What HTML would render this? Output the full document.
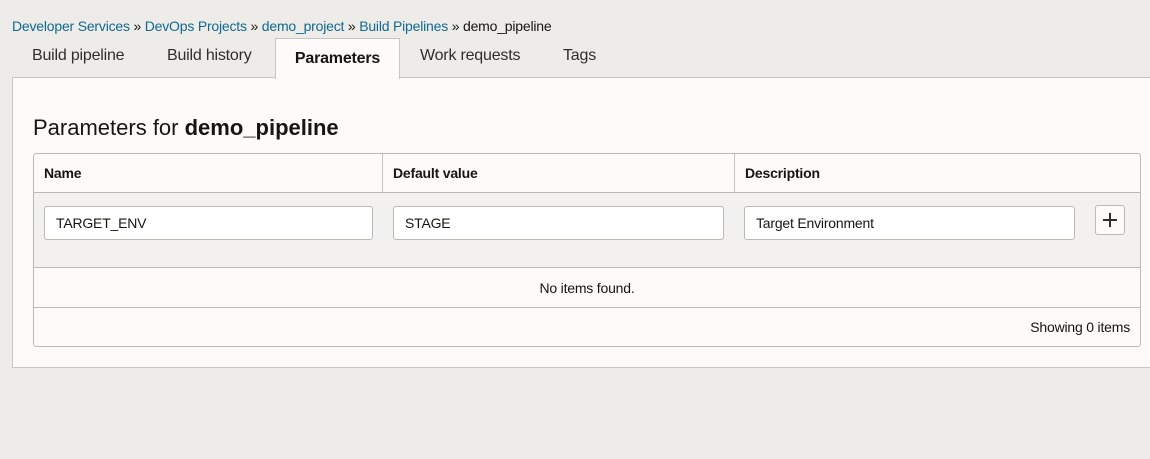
<!DOCTYPE html>
<html><head><style>
*{box-sizing:border-box;margin:0;padding:0}
body{width:1150px;height:459px;background:#eeece9;font-family:"Liberation Sans",sans-serif;position:relative;overflow:hidden;color:#161513}
.a{position:absolute}
.bc{top:18px;left:12px;font-size:14px;color:#161513;white-space:nowrap;letter-spacing:-0.2px}
.bc a{color:#0f6a8f;text-decoration:none}
.tab{top:47px;font-size:16px;color:#312d2a;letter-spacing:-0.2px}
.panel{left:12px;top:77px;width:1150px;height:291px;background:#fcfbfa;border:1px solid #c9c5c0}
.act{left:275px;top:38px;width:125px;height:41px;background:#fcfbfa;border:1px solid #c9c5c0;border-bottom:none;font-size:16px;font-weight:bold;text-align:center;line-height:40px;letter-spacing:-0.2px}
.tbl{left:33px;top:153px;width:1108px;height:194px;border:1px solid #bcb8b3;border-radius:3px;background:#fcfbfa}
.inp{height:34px;border:1px solid #bcb8b3;border-radius:3px;background:#fff;font-size:14px;padding-left:11px;line-height:32px;letter-spacing:-0.2px}
.th{font-size:14px;font-weight:bold;top:165px;letter-spacing:-0.2px}
</style></head><body>
<div class="a bc"><a>Developer Services</a> » <a>DevOps Projects</a> » <a>demo_project</a> » <a>Build Pipelines</a> » demo_pipeline</div>
<div class="a panel"></div>
<div class="a tab" style="left:32px">Build pipeline</div>
<div class="a tab" style="left:167px">Build history</div>
<div class="a act">Parameters</div>
<div class="a tab" style="left:420px">Work requests</div>
<div class="a tab" style="left:563px">Tags</div>
<div class="a" style="left:33px;top:115px;font-size:22px">Parameters for <b>demo_pipeline</b></div>
<div class="a tbl"></div>
<div class="a" style="left:34px;top:192px;width:1106px;height:76px;background:#f2f1ef;border-top:1px solid #bcb8b3;border-bottom:1px solid #bcb8b3"></div>
<div class="a" style="left:382px;top:154px;width:1px;height:38px;background:#c9c5c0"></div>
<div class="a" style="left:734px;top:154px;width:1px;height:38px;background:#c9c5c0"></div>
<div class="a th" style="left:44px">Name</div>
<div class="a th" style="left:393px">Default value</div>
<div class="a th" style="left:745px">Description</div>
<div class="a inp" style="left:44px;top:206px;width:329px">TARGET_ENV</div>
<div class="a inp" style="left:393px;top:206px;width:331px">STAGE</div>
<div class="a inp" style="left:744px;top:206px;width:331px">Target Environment</div>
<div class="a" style="left:1095px;top:205px;width:30px;height:30px;border:1px solid #bcb8b3;border-radius:3px;background:#fcfbfa"><div class="a" style="left:7px;top:13px;width:14px;height:1.5px;background:#312d2a"></div><div class="a" style="left:13px;top:7px;width:1.5px;height:14px;background:#312d2a"></div></div>
<div class="a" style="left:34px;top:307px;width:1106px;height:1px;background:#bcb8b3"></div>
<div class="a" style="left:34px;top:280px;width:1106px;text-align:center;font-size:14px;letter-spacing:-0.2px">No items found.</div>
<div class="a" style="right:20px;top:319px;font-size:14px;letter-spacing:-0.2px">Showing 0 items</div>
</body></html>
